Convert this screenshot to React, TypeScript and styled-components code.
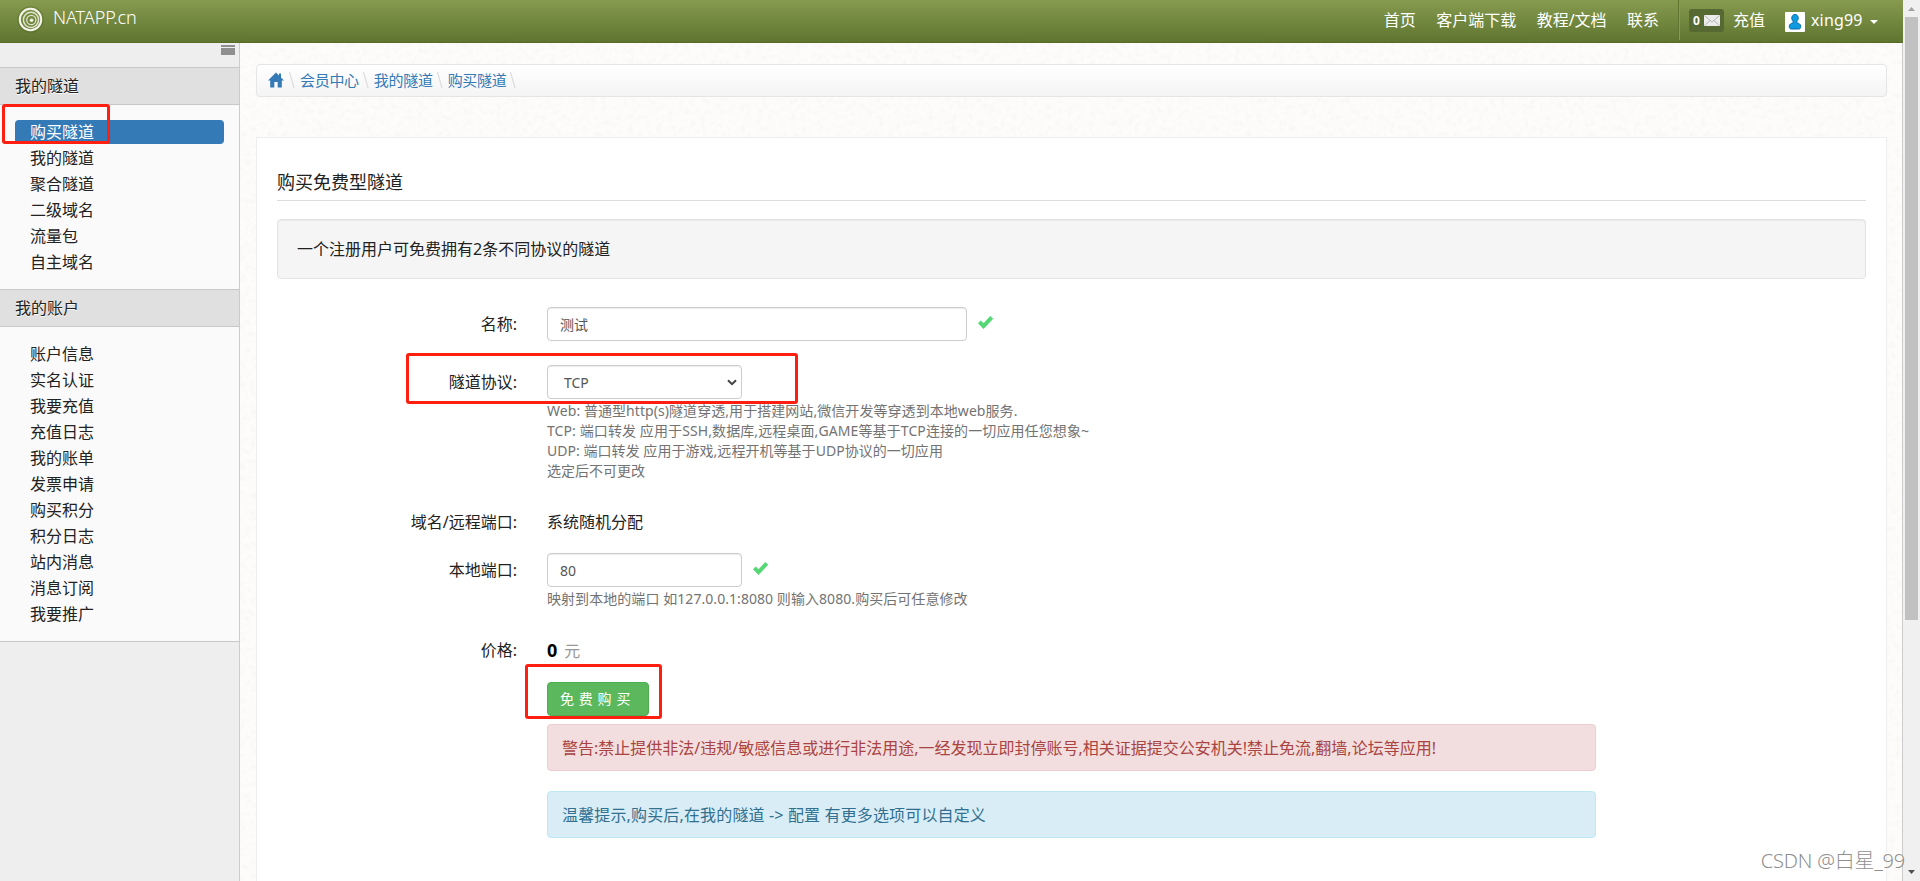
import React from "react";
import styled, { createGlobalStyle, css } from "styled-components";

const Global = createGlobalStyle`
  * { box-sizing: border-box; }
  html, body { margin: 0; height: 100%; overflow: hidden; }
  body { font: 16px/24px "Noto Sans", "Noto Sans CJK SC", sans-serif; color: #222; background: #fdfcfa; }
  a { color: inherit; text-decoration: none; }
`;

const Page = styled.div`
  position: relative;
  display: grid;
  grid-template-columns: 1903px 17px;
  height: 881px;
  overflow: hidden;
`;
const Site = styled.div`
  display: flex;
  flex-direction: column;
  min-height: 0;
`;
const Header = styled.header`
  display: flex;
  align-items: stretch;
  height: 43px;
  flex: none;
  padding: 0 25px 0 17px;
  color: #fff;
  background: linear-gradient(#869b4f, #5f752f);
  border-bottom: 1px solid #576c2b;
`;
const Brand = styled.a`
  display: flex;
  gap: 9px;
  flex: 1;
  font-size: 18px;
  line-height: 35px;
  letter-spacing: -0.1px;
  font-weight: 300;
  svg { margin-top: 6px; }
`;
const NavLinks = styled.nav`
  display: flex;
  gap: 20.4px;
  padding-right: 19px;
  height: 40px;
  line-height: 40px;
  border-right: 1px solid #5f7530;
`;
const UserBar = styled.div`
  display: flex;
  height: 40px;
  line-height: 40px;
  border-left: 1px solid #879c50;
  padding-left: 9px;
`;
const Badge = styled.span`
  display: flex;
  align-items: center;
  gap: 4px;
  width: 35px;
  height: 23px;
  margin: 9px 9px 0 0;
  padding-left: 4px;
  border-radius: 3px;
  background: #566932;
  font: bold 12px/22px "Noto Sans", sans-serif;
`;
const Avatar = styled.span`
  width: 20px;
  height: 20px;
  margin: 12px 6px 0 20px;
  background: #fff;
  border-radius: 1px;
  display: flex;
  justify-content: center;
`;
const UserName = styled.span`
  width: 52px;
  white-space: nowrap;
  letter-spacing: 0.15px;
`;
const Caret = styled.i`
  margin: 20px 0 0 7px;
  width: 0;
  height: 0;
  border: 4px solid transparent;
  border-top-color: #fff;
  border-bottom: 0;
`;
const Body = styled.div`
  display: flex;
  flex: 1;
  min-height: 0;
`;
const Sidebar = styled.aside`
  width: 240px;
  flex: none;
  background: #eee;
  border-right: 1px solid #ccc;
`;
const Collapse = styled.div`
  height: 24px;
  padding: 2px 4px 0 0;
  display: flex;
  justify-content: flex-end;
`;
const MenuTitle = styled.h3`
  margin: 0;
  height: 38px;
  padding-left: 15px;
  font-size: 16px;
  line-height: 37px;
  font-weight: 400;
  background: #e0e0e0;
  border: solid #c8c8c8;
  border-width: 1px 0;
  text-shadow: 0 1px 0 #fff;
`;
const Menu = styled.ul<{ $last?: boolean }>`
  list-style: none;
  margin: 0;
  padding: 15px;
  background: #fafafa;
  display: flex;
  flex-direction: column;
  gap: 2px;
  ${(p) => p.$last && css`border-bottom: 1px solid #c8c8c8;`}
`;
const MenuItem = styled.li<{ $active?: boolean }>`
  height: 24px;
  padding-left: 15px;
  line-height: 25px;
  border-radius: 4px;
  ${(p) => p.$active && css`background: #337ab7; color: #fff;`}
`;
const Content = styled.main`
  position: relative;
  flex: 1;
  display: flex;
  flex-direction: column;
  padding: 21px 15px 0 16px;
  background: #fdfcfa;
  border-right: 1px solid #ccc;
  isolation: isolate;
`;
const Paper = styled.svg`
  position: absolute;
  inset: 0;
  width: 100%;
  height: 100%;
  z-index: -1;
`;
const Crumbs = styled.nav`
  display: flex;
  align-items: center;
  height: 33px;
  padding: 0 0 2px 11px;
  font-size: 15px;
  letter-spacing: -0.3px;
  color: #337ab7;
  background: linear-gradient(#fff, #f4f4f4);
  border: 1px solid #e5e5e5;
  border-radius: 4px;
  svg { flex: none; }
`;
const Panel = styled.section`
  margin-top: 40px;
  flex: 1;
  padding: 25px 20px 0;
  background: #fff;
  border: 1px solid #eee;
  border-bottom: 0;
`;
const Title = styled.h2`
  margin: 0;
  height: 38px;
  font-size: 18px;
  line-height: 38px;
  font-weight: 400;
  border-bottom: 1px solid #ddd;
`;
const Well = styled.div`
  height: 60px;
  margin: 18px 0 28px;
  padding: 0 19px;
  line-height: 58px;
  background: #f5f5f5;
  border: 1px solid #e3e3e3;
  border-radius: 4px;
  box-shadow: inset 0 1px 1px rgba(0, 0, 0, 0.05);
`;
const Row = styled.div<{ $height: number }>`
  display: grid;
  grid-template-columns: 240px 1049px;
  column-gap: 30px;
  height: ${(p) => p.$height}px;
`;
const Label = styled.label`
  text-align: right;
  line-height: 34px;
`;
const Field = styled.div`
  display: flex;
  align-items: flex-start;
  gap: 11px;
  height: 34px;
  line-height: 34px;
`;
const Input = styled.div<{ $width: number }>`
  display: flex;
  align-items: center;
  justify-content: space-between;
  width: ${(p) => p.$width}px;
  height: 34px;
  padding: 2px 12px 0 12px;
  font-size: 14px;
  color: #555;
  background: #fff;
  border: 1px solid #ccc;
  border-radius: 4px;
  box-shadow: inset 0 1px 1px rgba(0, 0, 0, 0.075);
`;
const Select = styled(Input)`
  padding: 1px 4px 0 16px;
`;
const Tick = styled.svg`
  margin-top: 8px;
`;
const Help = styled.p`
  margin: 2px 0 0;
  font-size: 14px;
  line-height: 20px;
  color: #737373;
  white-space: nowrap;
`;
const Line = styled.span<{ $track?: number }>`
  display: block;
  letter-spacing: ${(p) => p.$track ?? 0}px;
`;
const Price = styled.strong`
  font-size: 18px;
  color: #000;
  margin-right: -4px;
`;
const Unit = styled.span`
  color: #999;
  padding-top: 1px;
`;
const Buy = styled.button`
  display: block;
  width: 102px;
  height: 34px;
  padding: 0 0 0 12px;
  text-align: left;
  font: 14px/32px "Noto Sans", "Noto Sans CJK SC", sans-serif;
  letter-spacing: 4.8px;
  color: #fff;
  background: #5cb85c;
  border: 1px solid #4cae4c;
  border-radius: 4px;
`;
const Alert = styled.div<{ $kind: "danger" | "info" }>`
  height: 47px;
  padding: 0 14px;
  margin: ${(p) => (p.$kind === "danger" ? "8px 0 20px" : "0")};
  line-height: 47px;
  white-space: nowrap;
  border: 1px solid;
  border-radius: 4px;
  ${(p) =>
    p.$kind === "danger"
      ? css`color: #a94442; background: #f2dede; border-color: #ebccd1;`
      : css`color: #31708f; background: #d9edf7; border-color: #bce8f1; letter-spacing: 0.15px;`}
`;
const ScrollTrack = styled.div`
  display: flex;
  flex-direction: column;
  align-items: center;
  justify-content: space-between;
  background: #f0f0f0;
`;
const Thumb = styled.div`
  width: 13px;
  height: 603px;
  margin-bottom: auto;
  background: #c1c1c1;
`;
const Highlight = styled.div<{ $x: number; $y: number; $w: number; $h: number }>`
  position: absolute;
  left: ${(p) => p.$x}px;
  top: ${(p) => p.$y}px;
  width: ${(p) => p.$w}px;
  height: ${(p) => p.$h}px;
  border: 3px solid #ff1f10;
  border-radius: 3px;
`;
const Watermark = styled.div`
  position: absolute;
  right: 15px;
  bottom: 5px;
  font-size: 20px;
  font-weight: 300;
  line-height: 30px;
  letter-spacing: -0.2px;
  color: #8f8f8f;
  white-space: nowrap;
  text-shadow: -1px -1px 0 #fff;
`;

const Logo = () => (
  <svg width="27" height="27" viewBox="0 0 27 27" fill="none">
    <circle cx="13.5" cy="13.5" r="12.6" stroke="#566b2a" strokeOpacity=".45" strokeWidth="1.4" />
    <circle cx="13.5" cy="13.5" r="10.7" stroke="#f3f5ea" strokeWidth="2" />
    <circle cx="14" cy="13.8" r="7.6" stroke="#dfe4cd" strokeWidth="1.5" />
    <circle cx="14.3" cy="14" r="4.6" stroke="#dfe4cd" strokeWidth="1.3" />
    <circle cx="14.6" cy="14.2" r="1.8" fill="#f3f5ea" />
  </svg>
);
const Slash = () => (
  <svg width="15" height="18" viewBox="0 0 15 18">
    <path d="M4.5 1L9 17" stroke="#ddd" strokeWidth="1.2" />
  </svg>
);
const Check = () => (
  <Tick width="17" height="15" viewBox="0 0 17 15">
    <path d="M0 8.3L2.8 5.5L5.5 8.2L12.3 1L15.2 3.8L5.5 14Z" fill="#53d874" />
  </Tick>
);

const tunnelMenu = ["购买隧道", "我的隧道", "聚合隧道", "二级域名", "流量包", "自主域名"];
const accountMenu = ["账户信息", "实名认证", "我要充值", "充值日志", "我的账单", "发票申请", "购买积分", "积分日志", "站内消息", "消息订阅", "我要推广"];

export default function App() {
  return (
    <Page>
      <Global />
      <Site>
        <Header>
          <Brand><Logo />NATAPP.cn</Brand>
          <NavLinks>
            <a>首页</a><a>客户端下载</a><a>教程/文档</a><a>联系</a>
          </NavLinks>
          <UserBar>
            <Badge>
              0
              <svg width="16" height="11" viewBox="0 0 16 11">
                <rect width="16" height="11" rx="1" fill="#ececec" />
                <path d="M1 1L8 7L15 1M1 10L6 5.5M15 10L10 5.5" fill="none" stroke="#b5b5b5" />
              </svg>
            </Badge>
            <a>充值</a>
            <Avatar>
              <svg width="14" height="20" viewBox="0 0 14 20">
                <path d="M7 2.5C9 2.5 10.2 4 10.2 6C10.2 8 9.3 9 8.8 9.7V10.8C11 11.5 12.7 12 12.7 14.5C12.7 16.4 12 17 10.5 17H3.5C2 17 1.3 16.4 1.3 14.5C1.3 12 3 11.5 5.2 10.8V9.7C4.7 9 3.8 8 3.8 6C3.8 4 5 2.5 7 2.5Z" fill="#0e9be0" stroke="#0b6cab" />
              </svg>
            </Avatar>
            <UserName>xing99</UserName>
            <Caret />
          </UserBar>
        </Header>
        <Body>
          <Sidebar>
            <Collapse>
              <svg width="14" height="10" viewBox="0 0 14 10">
                <path d="M0 0H14V2H0ZM0 3H14V10H0Z" fill="#8f8f8f" />
              </svg>
            </Collapse>
            <MenuTitle>我的隧道</MenuTitle>
            <Menu>
              {tunnelMenu.map((t, i) => <MenuItem key={t} $active={i === 0}>{t}</MenuItem>)}
            </Menu>
            <MenuTitle>我的账户</MenuTitle>
            <Menu $last>
              {accountMenu.map((t) => <MenuItem key={t}>{t}</MenuItem>)}
            </Menu>
          </Sidebar>
          <Content>
            <Paper>
              <filter id="grain">
                <feTurbulence type="fractalNoise" baseFrequency="0.18" numOctaves="4" seed="8" />
                <feColorMatrix values="0 0 0 0 0.55  0 0 0 0 0.54  0 0 0 0 0.51  0.9 0 0 0 -0.42" />
              </filter>
              <rect width="100%" height="100%" filter="url(#grain)" opacity="0.25" />
            </Paper>
            <Crumbs>
              <svg width="17" height="16" viewBox="0 0 17 16">
                <path d="M8 0.5L11 3.4V1.5H13V5.4L16 8.6H13.8V15.5H9.7V10H6.3V15.5H2.2V8.6H0Z" fill="#337ab7" />
              </svg>
              <Slash /><a>会员中心</a><Slash /><a>我的隧道</a><Slash /><a>购买隧道</a><Slash />
            </Crumbs>
            <Panel>
              <Title>购买免费型隧道</Title>
              <Well>一个注册用户可免费拥有2条不同协议的隧道</Well>
              <Row $height={58}>
                <Label>名称:</Label>
                <Field><Input $width={420}>测试</Input><Check /></Field>
              </Row>
              <Row $height={140}>
                <Label>隧道协议:</Label>
                <div>
                  <Select $width={195}>
                    TCP
                    <svg width="10" height="7" viewBox="0 0 10 7"><path d="M1 1.2L5 5.2L9 1.2" fill="none" stroke="#444" strokeWidth="2" /></svg>
                  </Select>
                  <Help>
                    <Line $track={0.06}>Web: 普通型http(s)隧道穿透,用于搭建网站,微信开发等穿透到本地web服务.</Line>
                    <Line $track={0.1}>TCP: 端口转发 应用于SSH,数据库,远程桌面,GAME等基于TCP连接的一切应用任您想象~</Line>
                    <Line $track={0.04}>UDP: 端口转发 应用于游戏,远程开机等基于UDP协议的一切应用</Line>
                    <Line>选定后不可更改</Line>
                  </Help>
                </div>
              </Row>
              <Row $height={48}>
                <Label>域名/远程端口:</Label>
                <Field>系统随机分配</Field>
              </Row>
              <Row $height={80}>
                <Label>本地端口:</Label>
                <div>
                  <Field><Input $width={195}>80</Input><Check /></Field>
                  <Help><Line $track={0.06}>映射到本地的端口 如127.0.0.1:8080 则输入8080.购买后可任意修改</Line></Help>
                </div>
              </Row>
              <Row $height={49}>
                <Label>价格:</Label>
                <Field><Price>0</Price><Unit>元</Unit></Field>
              </Row>
              <Row $height={160}>
                <span />
                <div>
                  <Buy>免费购买</Buy>
                  <Alert $kind="danger">警告:禁止提供非法/违规/敏感信息或进行非法用途,一经发现立即封停账号,相关证据提交公安机关!禁止免流,翻墙,论坛等应用!</Alert>
                  <Alert $kind="info">温馨提示,购买后,在我的隧道 -&gt; 配置 有更多选项可以自定义</Alert>
                </div>
              </Row>
            </Panel>
          </Content>
        </Body>
      </Site>
      <ScrollTrack>
        <svg width="17" height="17" viewBox="0 0 17 17"><path d="M5 11L8.5 7L12 11Z" fill="#a3a3a3" /></svg>
        <Thumb />
        <svg width="17" height="17" viewBox="0 0 17 17"><path d="M5 6L8.5 10L12 6Z" fill="#505050" /></svg>
      </ScrollTrack>
      <Highlight $x={2} $y={104} $w={108} $h={40} />
      <Highlight $x={406} $y={353} $w={392} $h={51} />
      <Highlight $x={525} $y={664} $w={137} $h={55} />
      <Watermark>CSDN @白星_99</Watermark>
    </Page>
  );
}
